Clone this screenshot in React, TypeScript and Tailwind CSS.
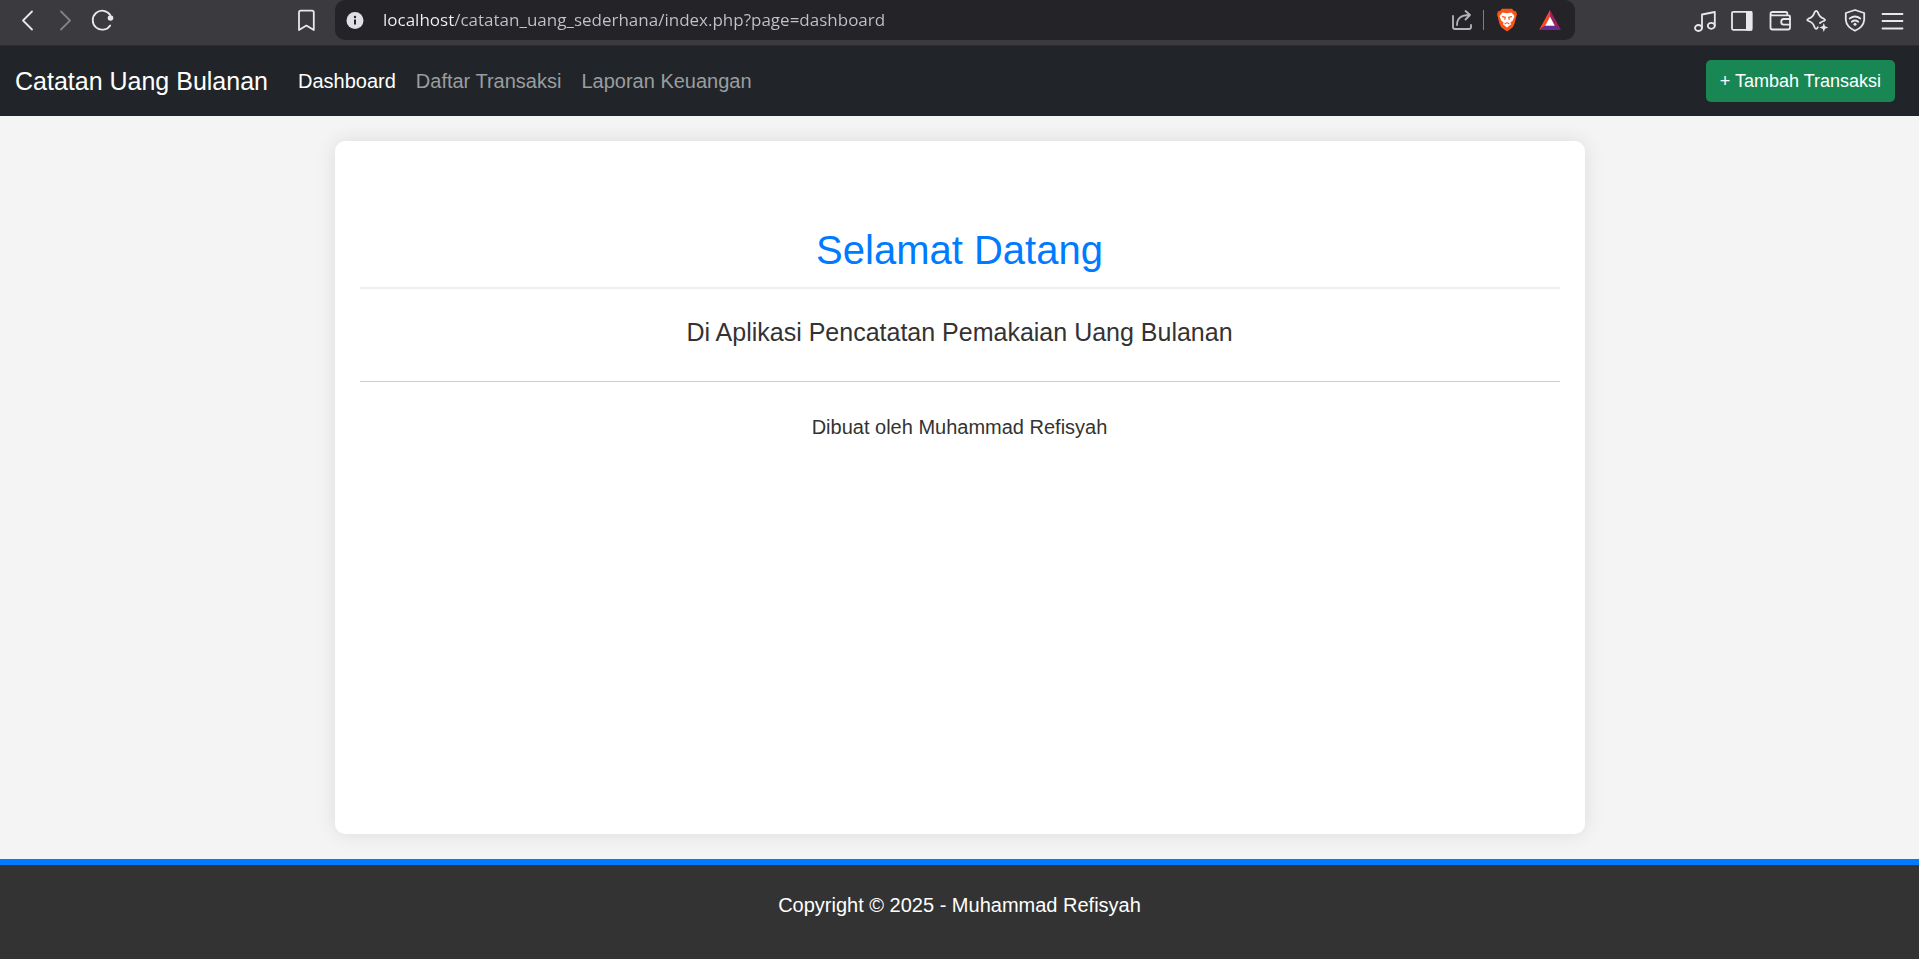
import type { ReactNode } from "react";

type IconProps = { children: ReactNode; className?: string };

function Icon({ children, className = "" }: IconProps) {
  return (
    <svg
      viewBox="0 0 24 24"
      width="24"
      height="24"
      fill="none"
      stroke="currentColor"
      strokeWidth="1.8"
      strokeLinecap="round"
      strokeLinejoin="round"
      aria-hidden="true"
      className={className}
    >
      {children}
    </svg>
  );
}

function ToolButton({ label, children, className = "" }: { label: string; children: ReactNode; className?: string }) {
  return (
    <button type="button" aria-label={label} className={`flex h-10 w-6 shrink-0 items-center justify-center ${className}`}>
      {children}
    </button>
  );
}

function BrowserBar() {
  return (
    <div className="flex h-[46px] items-start border-b border-[#2d2d31] bg-[#3b3a3f] text-[#e8e8ea]">
      <div className="flex w-[335px] shrink-0 items-center justify-between px-4">
        <div className="flex gap-[13px]">
          <ToolButton label="Kembali">
            <Icon><path d="M16 3.500 L7 12.500 L16 21.500" /></Icon>
          </ToolButton>
          <ToolButton label="Maju" className="text-[#828186]">
            <Icon><path d="M8 3.500 L17 12.500 L8 21.500" /></Icon>
          </ToolButton>
          <ToolButton label="Muat ulang">
            <Icon>
              <path d="M20.200 7 A9.500 9.500 0 1 0 20.200 17.400" />
              <circle cx="20.500" cy="10" r="2.800" fill="currentColor" stroke="none" />
            </Icon>
          </ToolButton>
        </div>
        <ToolButton label="Markah">
          <Icon><path d="M4 4.500 Q4 2.700 5.800 2.700 H17 Q18.800 2.700 18.800 4.500 V22 L11.400 17.600 L4 22 Z" /></Icon>
        </ToolButton>
      </div>

      <div className="flex h-10 min-w-0 flex-1 items-center rounded-[10px] bg-[#242328] pr-[13px] pl-2">
        <ToolButton label="Informasi situs">
          <Icon>
            <circle cx="12" cy="12.500" r="8.500" fill="#e0dfe5" stroke="none" />
            <path d="M12 11.500 V16.500" stroke="#242328" strokeWidth="2" strokeLinecap="butt" />
            <circle cx="12" cy="9" r="1.200" fill="#242328" stroke="none" />
          </Icon>
        </ToolButton>
        <input
          aria-label="Alamat"
          type="text"
          defaultValue="localhost/catatan_uang_sederhana/index.php?page=dashboard"
          className="ml-4 h-10 min-w-0 flex-1 bg-[linear-gradient(90deg,#f4f4f6_71px,#c4c3c9_71px)] bg-clip-text pb-[2px] font-['Open_Sans',sans-serif] text-[17px] text-transparent outline-none"
        />
        <ToolButton label="Bagikan" className="text-[#b5b4ba]">
          <Icon>
            <path d="M3 8 V19 Q3 21 5 21 H19 Q21 21 21 19 V17" />
            <path d="M7 17 C7 10.500 11 7 19.500 7 M15.500 3 L20 7 L15.500 11.500" />
          </Icon>
        </ToolButton>
        <span className="ml-[9px] h-5 w-px bg-[#7f7e84]" />
        <ToolButton label="Brave Shields" className="ml-[11px]">
          <Icon>
            <path d="M7 0.800 H17 L19 3 L21 3.200 L22 6.500 L21.300 8.500 C20.300 13 19.300 17.500 17.500 19.500 L12 23.500 L6.500 19.500 C4.700 17.500 3.700 13 2.700 8.500 L2 6.500 L3 3.200 L5 3 Z" fill="#fb5417" stroke="none" />
            <path d="M7.500 4.600 L12 5.300 L16.500 4.600 L19.500 8 L17.800 12.500 L15.300 14.800 L16.200 16.300 L12 19.600 L7.800 16.300 L8.700 14.800 L6.200 12.500 L4.500 8 Z" fill="#fff" stroke="none" />
            <path d="M7.500 8.600 L10.300 9.400 L9.800 11.500 M16.500 8.600 L13.700 9.400 L14.200 11.500 M10 15.800 L12 14.600 L14 15.800" stroke="#fb5417" strokeWidth="1.100" />
          </Icon>
        </ToolButton>
        <ToolButton label="Brave Rewards" className="ml-[19px]">
          <Icon>
            <path d="M12 2 L12 8.500 L7.500 17.500 L1 22 Z" fill="#ff4724" stroke="none" />
            <path d="M12 2 L23 22 L16.500 17.500 L12 8.500 Z" fill="#9e1f63" stroke="none" />
            <path d="M1 22 L7.500 17.500 H16.500 L23 22 Z" fill="#662d91" stroke="none" />
            <path d="M12 8.500 L16.800 17.700 H7.200 Z" fill="#fff" stroke="none" />
          </Icon>
        </ToolButton>
      </div>

      <div className="flex w-[344px] shrink-0 justify-end pr-[15px]">
        <div className="flex w-[211px] justify-between">
          <ToolButton label="Media">
            <Icon>
              <ellipse cx="5.500" cy="20" rx="3.500" ry="3" />
              <ellipse cx="18.300" cy="17.800" rx="3.500" ry="3" />
              <path d="M9 20 V6.500 L21.800 4 V17.800" />
            </Icon>
          </ToolButton>
          <ToolButton label="Panel samping">
            <Icon>
              <rect x="2" y="3.800" width="19.500" height="18" rx="1.200" />
              <rect x="16" y="3" width="6.400" height="19.700" rx="1" fill="currentColor" stroke="none" />
            </Icon>
          </ToolButton>
          <ToolButton label="Dompet">
            <Icon>
              <path d="M2.500 5.500 V19.500 Q2.500 21.500 4.500 21.500 H20 Q22 21.500 22 19.500 V9 Q22 7.300 20.300 7.300 H4.500 Q2.500 7.300 2.500 5.700 Q2.500 4 4.500 4 H17.500 Q19.300 4 19.300 5.500 V7.300" />
              <path d="M22 11 H15.700 Q13.200 11 13.200 14 Q13.200 16.700 15.700 16.700 H22" />
            </Icon>
          </ToolButton>
          <ToolButton label="Leo AI">
            <Icon>
              <path d="M12.800 19.300 Q11.200 22.300 9.600 19.300 C8.500 15.700 7.500 14.300 3.500 13 Q1 11.900 3.500 10.700 C7.300 9.500 8.500 8 9.600 4.300 Q11.200 1.400 12.800 4.300 C14 8 15 9.500 18.800 10.700 Q21.300 11.900 18.800 13 Q16.300 13.700 15 15" />
              <path d="M18.800 15 L20 18.300 L23.300 19.500 L20 20.700 L18.800 24 L17.600 20.700 L14.300 19.500 L17.600 18.300 Z" fill="currentColor" stroke="none" />
            </Icon>
          </ToolButton>
          <ToolButton label="VPN">
            <Icon>
              <path d="M12 2 L21.200 5 V12 Q20.500 19 12 22.800 Q3.500 19 2.800 12 V5 Z" />
              <path d="M6.700 10.500 Q12 6.500 17.300 10.500 M8.800 13.700 Q12 11.300 15.200 13.700" />
              <circle cx="12" cy="16.300" r="1.500" fill="currentColor" stroke="none" />
            </Icon>
          </ToolButton>
          <ToolButton label="Menu">
            <Icon><path d="M2.500 6 H22.500 M2.500 13 H22.500 M2.500 20.500 H22.500" /></Icon>
          </ToolButton>
        </div>
      </div>
    </div>
  );
}

function Navbar() {
  return (
    <nav className="flex h-[70px] items-center bg-[#212529] pr-6 pl-[15px] text-[20px] leading-[30px]">
      <a href="#beranda" className="mr-[30px] text-[25px] text-white">Catatan Uang Bulanan</a>
      <div className="flex flex-1 gap-5">
        <a href="#dashboard" aria-current="page" className="text-white">Dashboard</a>
        <a href="#transaksi" className="text-[#9b9d9f]">Daftar Transaksi</a>
        <a href="#laporan" className="text-[#9b9d9f]">Laporan Keuangan</a>
      </div>
      <button type="button" className="h-[42px] rounded-[5px] bg-[#198754] px-[14px] text-[18px] whitespace-nowrap text-white">
        + Tambah Transaksi
      </button>
    </nav>
  );
}

export default function App() {
  return (
    <div className="flex min-h-screen flex-col bg-[#f4f4f4] font-['Liberation_Sans',Arial,sans-serif] text-[#333]">
      <BrowserBar />
      <Navbar />
      <main className="flex flex-1 flex-col px-6 py-[25px]">
        <section className="mx-auto w-full max-w-[1250px] flex-1 rounded-[10px] bg-white px-[25px] pt-[85px] text-center shadow-[0_0_20px_rgba(0,0,0,0.1)]">
          <h1 className="border-b-2 border-[#eee] pb-3 text-[40px] leading-[49px] text-[#007bff]">Selamat Datang</h1>
          <p className="mt-6 text-[25px] leading-[38px]">Di Aplikasi Pencatatan Pemakaian Uang Bulanan</p>
          <hr className="my-[30px] border-[#ccc]" />
          <p className="text-[20px] leading-[30px]">Dibuat oleh Muhammad Refisyah</p>
        </section>
      </main>
      <footer className="h-[100px] border-t-[6px] border-[#007bff] bg-[#333] pt-[25px] text-center text-[20px] leading-[30px] text-white">
        <p>Copyright © 2025 - Muhammad Refisyah</p>
      </footer>
    </div>
  );
}
